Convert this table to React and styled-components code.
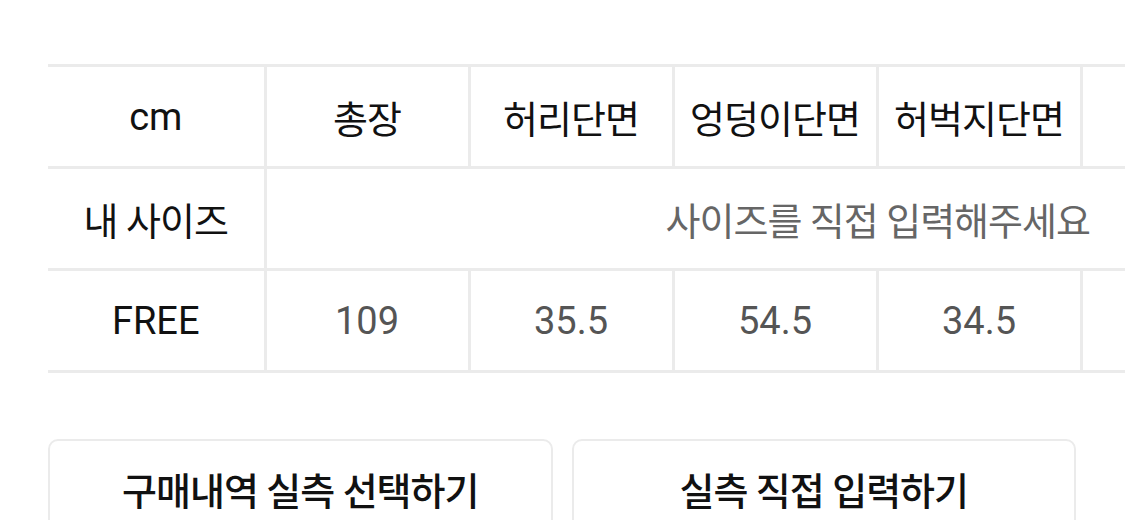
import React from 'react';
import styled, { createGlobalStyle } from 'styled-components';

const GlobalStyle = createGlobalStyle`
  body {
    margin: 0;
    background: #fff;
    font-family: Roboto, "Noto Sans CJK KR", sans-serif;
    color: #111;
  }
`;

const Page = styled.div`
  width: 1125px;
  height: 520px;
  overflow: hidden;
  padding: 64px 49px 0 48px;
  box-sizing: border-box;
`;

const TableScroll = styled.div`
  margin-right: -49px;
  overflow: hidden;
`;

const Table = styled.table`
  border-collapse: collapse;
  table-layout: fixed;
  width: 1441px;
`;

const Cell = styled.td`
  height: 99px;
  padding: 0;
  text-align: center;
  vertical-align: middle;
  border-top: 3px solid #ebebeb;
  border-bottom: 3px solid #ebebeb;
  border-left: 3px solid #ebebeb;
  font-size: 38px;
  letter-spacing: ${(p) => (p.$ko ? '-1px' : '0')};
  color: ${(p) => (p.$muted ? '#555' : '#111')};
  font-weight: 400;
  white-space: nowrap;
  &:first-child {
    border-left: none;
  }
`;

const Placeholder = styled(Cell)`
  color: #666;
  letter-spacing: -1px;
`;

const Buttons = styled.div`
  display: grid;
  grid-template-columns: 1fr 1fr;
  gap: 19px;
  margin-top: 66px;
`;

const Button = styled.button`
  height: 104px;
  background: #fff;
  border: 2px solid #ebebeb;
  border-radius: 10px;
  font-family: Roboto, "Noto Sans CJK KR", sans-serif;
  font-size: 38px;
  font-weight: 500;
  letter-spacing: -1px;
  color: #111;
  padding: 0 0 6px;
`;

// 화면 밖으로 잘리는 나머지 두 칸은 비워 둠
const headers = ['총장', '허리단면', '엉덩이단면', '허벅지단면', '', ''];
const values = ['109', '35.5', '54.5', '34.5', '', ''];

export default function App() {
  return (
    <>
      <GlobalStyle />
      <Page>
        <TableScroll>
          <Table>
            <colgroup>
              <col style={{ width: 217 }} />
              {headers.map((h, i) => (
                <col key={i} style={{ width: 204 }} />
              ))}
            </colgroup>
            <tbody>
              <tr>
                <Cell>cm</Cell>
                {headers.map((h, i) => (
                  <Cell key={i} $ko>{h}</Cell>
                ))}
              </tr>
              <tr>
                <Cell $ko>내 사이즈</Cell>
                <Placeholder colSpan={6}>사이즈를 직접 입력해주세요</Placeholder>
              </tr>
              <tr>
                <Cell>FREE</Cell>
                {values.map((v, i) => (
                  <Cell key={i} $muted>{v}</Cell>
                ))}
              </tr>
            </tbody>
          </Table>
        </TableScroll>
        <Buttons>
          <Button>구매내역 실측 선택하기</Button>
          <Button>실측 직접 입력하기</Button>
        </Buttons>
      </Page>
    </>
  );
}
